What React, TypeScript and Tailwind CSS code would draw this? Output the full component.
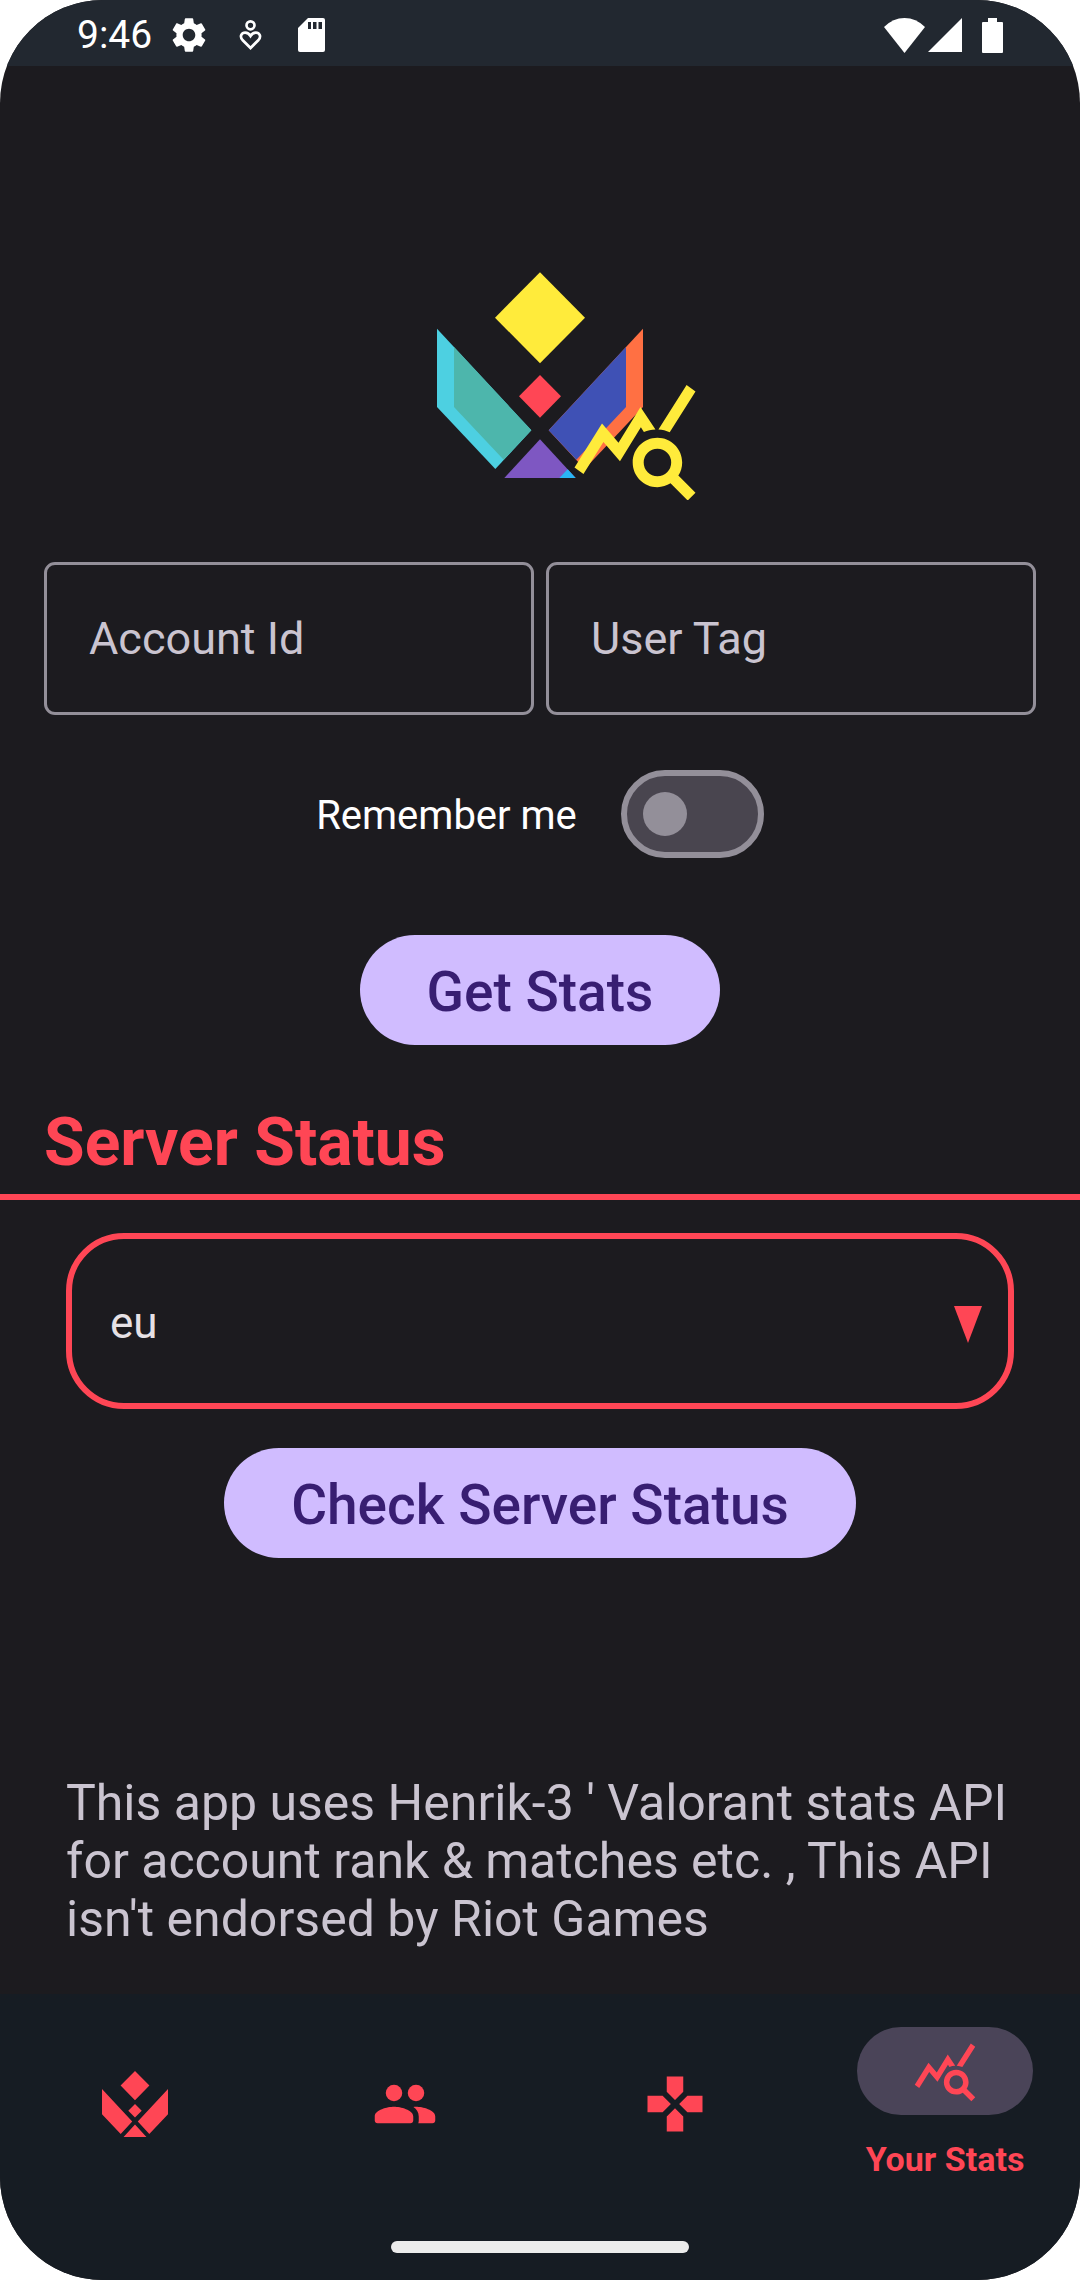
import { useState, type ReactNode } from "react";
import { MdGamepad, MdQueryStats, MdSettings } from "react-icons/md";

const QUERY_STATS_PATH =
  "M19.88 18.47c.44-.7.7-1.51.7-2.39 0-2.49-2.01-4.5-4.5-4.5s-4.5 2.01-4.5 4.5 2.01 4.5 4.49 4.5c.88 0 1.7-.26 2.39-.7L21.58 23 23 21.58l-3.12-3.11zm-3.8.11a2.5 2.5 0 0 1 0-5 2.5 2.5 0 0 1 0 5zm-.36-8.5c-.74.02-1.45.18-2.1.45l-.55-.83-3.8 6.18-3.01-3.52-3.63 5.81L1 17l5-8 3 3.5L13 6l2.72 4.08zm2.59.5c-.64-.28-1.33-.45-2.05-.49L21.38 2 23 3.18l-4.69 7.4z";

function Logo() {
  return (
    <svg viewBox="-108 36 936 684" className="h-[228px] w-[312px]" role="img" aria-label="App logo">
      <path fill="#ffeb3b" d="M360 37 495 173 360 310 225 173z" />
      <path fill="#ff4655" d="M360 345 423 409 360 473 297 409z" />
      <path fill="#4dd0e1" d="M51 206 334 511 226 627 51 441z" />
      <path fill="#4db6ac" d="M102 261 334 511 251 599 102 441z" />
      <path fill="#ff7043" d="M669 206 386 511 494 627 669 441z" />
      <path fill="#3f51b5" d="M618 261 386 511 469 599 618 441z" />
      <path fill="#7e57c2" d="M360 538 467 654H253z" />
      <path fill="#29b6f6" d="M443 628 467 654H418z" />
      <path fill="#ffeb3b" transform="translate(447 342) scale(16.5)" d={QUERY_STATS_PATH} />
    </svg>
  );
}

function CrestIcon() {
  return (
    <svg viewBox="51 37 618 618" className="size-[66px]" fill="currentColor" aria-hidden="true">
      <path d="M360 37 495 173 360 310 225 173zM360 345 423 409 360 473 297 409zM51 206 334 511 226 627 51 441zM669 206 386 511 494 627 669 441zM360 538 467 654H253z" />
    </svg>
  );
}

function GroupIcon() {
  return (
    <svg viewBox="0 0 24 24" className="size-[66px]" fill="currentColor" aria-hidden="true">
      <circle cx="8" cy="8" r="3" />
      <circle cx="16" cy="8" r="3" />
      <path d="M8 13c-2.33 0-7 1.17-7 3.5V18c0 .55.45 1 1 1h12c.55 0 1-.45 1-1v-1.5c0-2.33-4.67-3.5-7-3.5zM16 13c-.29 0-.62.02-.97.05.02.01.03.03.04.04 1.14.83 1.93 1.94 1.93 3.41V18c0 .35-.07.69-.18 1H22c.55 0 1-.45 1-1v-1.5c0-2.33-4.67-3.5-7-3.5z" />
    </svg>
  );
}

function StatusBar() {
  return (
    <header className="flex h-[66px] items-center justify-between bg-[#222830] px-[77px] pt-1 text-white">
      <div className="flex items-center">
        <span className="text-[39px] leading-[62px]">9:46</span>
        <MdSettings className="ml-4 size-[42px]" aria-hidden="true" />
        <svg viewBox="714 58 68 96" className="ml-[29px] h-8 w-[23px]" fill="none" stroke="#fff" strokeWidth="8" aria-hidden="true">
          <circle cx="748" cy="77" r="12" />
          <path d="M748 145 724 121C714 109 722 99 732 99C740 99 745 104 748 109C751 104 756 99 764 99C774 99 782 109 772 121z" />
        </svg>
        <svg viewBox="0 0 27 34" className="ml-9 h-[34px] w-[27px]" aria-hidden="true">
          <path fill="#fff" d="M10 0H25Q27 0 27 2V32Q27 34 25 34H2Q0 34 0 32V10z" />
          <path fill="#222830" d="M10 4h3v7h-3zM15 4h3.500v7H15zM20.500 4H24v7h-3.500z" />
        </svg>
      </div>
      <div className="flex items-center">
        <svg viewBox="0 0 41 35" className="h-[35px] w-[41px]" fill="#fff" aria-hidden="true">
          <path d="M0 9Q9 0 20.500 0T41 9L20.500 35z" />
        </svg>
        <svg viewBox="0 0 34 34" className="ml-[3px] size-[34px]" fill="#fff" aria-hidden="true">
          <path d="M34 0V34H0z" />
        </svg>
        <svg viewBox="0 0 21 35" className="ml-5 h-[35px] w-[21px]" fill="#fff" aria-hidden="true">
          <path d="M6 0H15V4H20Q21 4 21 5V34Q21 35 20 35H1Q0 35 0 34V5Q0 4 1 4H6z" />
        </svg>
      </div>
    </header>
  );
}

function TextField({ label }: { label: string }) {
  return (
    <input
      type="text"
      aria-label={label}
      placeholder={label}
      className="h-[153px] min-w-0 flex-1 rounded-[11px] border-3 border-[#938f99] bg-transparent px-[42px] text-[45px] text-[#e6e1e5] outline-none placeholder:text-[#cac4d0] placeholder:opacity-100"
    />
  );
}

function PillButton({ children }: { children: ReactNode }) {
  return (
    <button
      type="button"
      className="h-[110px] self-center rounded-full bg-[#d0bcff] px-[67px] pt-1 text-[55px] font-medium text-[#381e72]"
    >
      {children}
    </button>
  );
}

function NavItem({ label, active, children }: { label: string; active?: boolean; children: ReactNode }) {
  return (
    <a
      href="#"
      aria-label={label}
      aria-current={active ? "page" : undefined}
      className="flex h-[220px] min-w-0 flex-1 flex-col items-center justify-center gap-[22px]"
    >
      {active ? (
        <>
          <span className="flex h-[88px] w-44 items-center justify-center rounded-full bg-[#4a4458]">{children}</span>
          <span className="text-[34px] leading-[44px] font-bold">{label}</span>
        </>
      ) : (
        children
      )}
    </a>
  );
}

export default function App() {
  const [remember, setRemember] = useState(false);
  const [region, setRegion] = useState("eu");

  return (
    <div className="bg-white font-[Roboto,sans-serif]">
      <div className="flex min-h-screen flex-col overflow-hidden rounded-[103px] bg-[#1c1b1f]">
        <StatusBar />

        <main className="flex flex-1 flex-col pt-[206px] pb-[46px]">
          <div className="flex justify-center">
            <Logo />
          </div>

          <div className="mt-[62px] flex gap-3 px-11">
            <TextField label="Account Id" />
            <TextField label="User Tag" />
          </div>

          <label className="mt-[55px] flex items-center justify-center gap-11 text-[40px] text-white">
            <span className="pt-1">Remember me</span>
            <input
              type="checkbox"
              role="switch"
              checked={remember}
              onChange={(e) => setRemember(e.target.checked)}
              className="flex h-[88px] w-[143px] appearance-none items-center rounded-full border-6 border-[#938f99] bg-[#49454f] px-4 before:size-11 before:rounded-full before:bg-[#938f99] checked:justify-end checked:bg-[#d0bcff]"
            />
          </label>

          <div className="mt-[77px] flex flex-col">
            <PillButton>Get Stats</PillButton>
          </div>

          <section className="mt-[59px] flex flex-col">
            <h2 className="border-b-6 border-[#ff4655] px-11 pb-[13px] text-[66px] leading-[77px] font-bold text-[#ff4655]">
              Server Status
            </h2>
            <div className="relative mx-[66px] mt-[33px]">
              <select
                aria-label="Server region"
                value={region}
                onChange={(e) => setRegion(e.target.value)}
                className="h-44 w-full appearance-none rounded-[58px] border-6 border-[#ff4655] bg-transparent px-[38px] pt-1 text-[44px] text-[#e6e1e5] outline-none"
              >
                <option>eu</option>
                <option>na</option>
                <option>ap</option>
                <option>kr</option>
              </select>
              <svg
                viewBox="0 0 28 37"
                className="pointer-events-none absolute top-[73px] right-8 h-[37px] w-7"
                fill="#ff4655"
                aria-hidden="true"
              >
                <path d="M0 0H28L14 37z" />
              </svg>
            </div>
            <div className="mt-[39px] flex flex-col">
              <PillButton>Check Server Status</PillButton>
            </div>
          </section>

          <p className="mt-auto px-[66px] text-[50px] leading-[58px] text-[#cac4d0]">
            This app uses Henrik-3 ' Valorant stats API for account rank &amp; matches etc. , This API isn't endorsed by
            Riot Games
          </p>
        </main>

        <footer className="bg-[#161c23]">
          <nav className="flex text-[#ff4655]">
            <NavItem label="Home">
              <CrestIcon />
            </NavItem>
            <NavItem label="Agents">
              <GroupIcon />
            </NavItem>
            <NavItem label="Game Modes">
              <MdGamepad className="size-[66px]" aria-hidden="true" />
            </NavItem>
            <NavItem label="Your Stats" active>
              <MdQueryStats className="size-[66px]" aria-hidden="true" />
            </NavItem>
          </nav>
          <div className="flex h-[66px] items-center justify-center">
            <div className="h-3 w-[298px] rounded-full bg-[#ececec]" />
          </div>
        </footer>
      </div>
    </div>
  );
}
